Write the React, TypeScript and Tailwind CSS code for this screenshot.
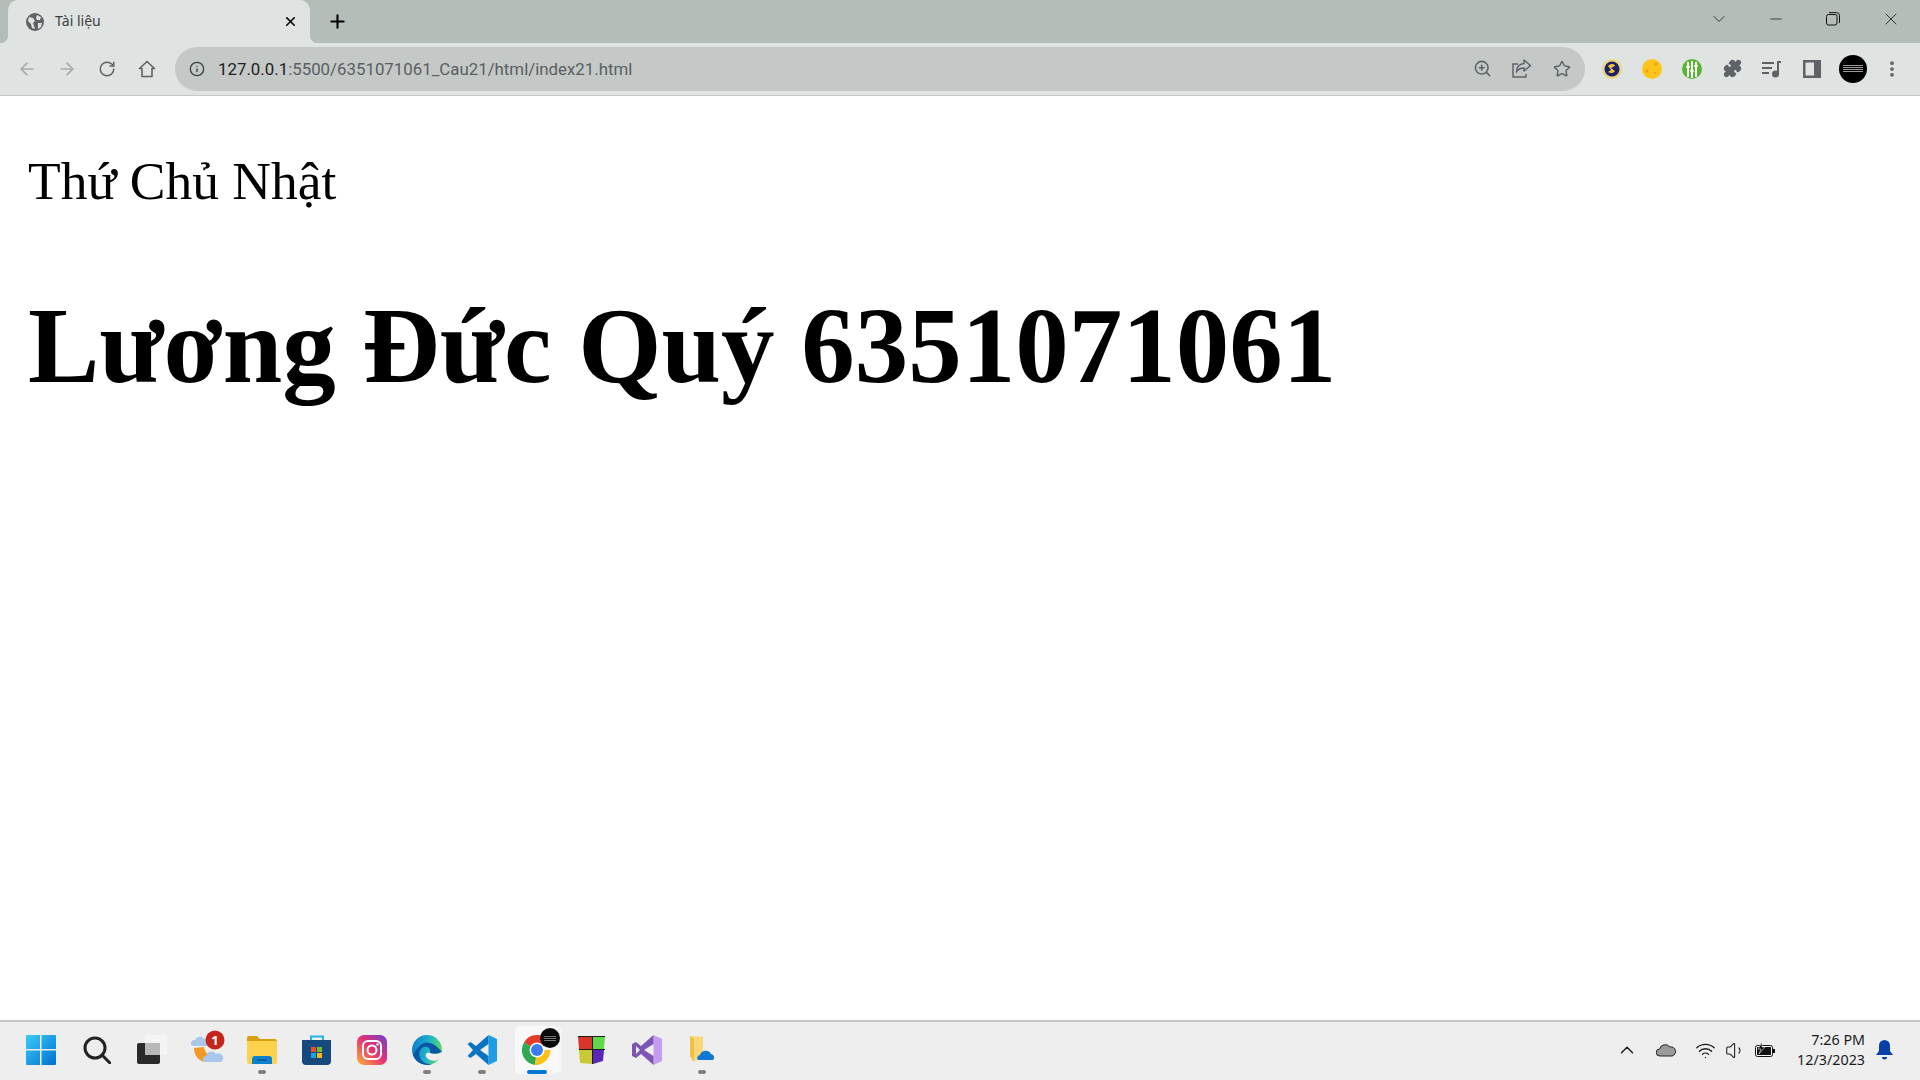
import { ArrowLeft, ArrowRight, ChevronDown, ChevronUp, Minus, Plus, RotateCw, Star, X, ZoomIn, Puzzle, MoreVertical, Info, Wifi, Volume1 } from "lucide-react"

const TITLE = "font-['Liberation_Serif',serif]"

function Globe() {
    return (
        <svg width="18" height="18" viewBox="0 0 18 18">
            <circle cx="9" cy="9" r="9" fill="#5f6368" />
            <path d="M3 4l4 1 2 3-2 2 1 3 1 3-3-1-1-4-3-3zM11 2l4 2-1 3-3 0-1-2zM12 10l4 0-1 4-3 2z" fill="#dfe3e2" />
        </svg>
    )
}

function Tab() {
    return (
        <div className="relative ml-2 flex h-[43px] w-[302px] items-center rounded-t-[10px] bg-[#dfe3e2] pl-[18px] pr-[11px]">
            <div className="absolute bottom-0 -left-2 h-2 w-2 bg-[radial-gradient(circle_at_0_0,#b5bdb8_8px,#dfe3e2_8.5px)]" />
            <div className="absolute bottom-0 -right-2 h-2 w-2 bg-[radial-gradient(circle_at_100%_0,#b5bdb8_8px,#dfe3e2_8.5px)]" />
            <Globe />
            <span className="mb-[2px] pl-[11px] text-[14px] text-[#3c4043]">Tài liệu</span>
            <X className="ml-auto mr-px text-black" size={15} strokeWidth={2.6} />
        </div>
    )
}

function TabStrip() {
    return (
        <div className="flex h-[43px] items-center bg-[#b5bdb8]">
            <Tab />
            <Plus className="ml-[17px] text-black" size={21} strokeWidth={2.4} />
            <div className="ml-auto flex items-center pb-[6px] text-[#1a1a1a]">
                <ChevronDown size={20} strokeWidth={1} className="mr-[38px]" />
                <Minus size={18} strokeWidth={1} className="mr-[41px]" />
                <svg width="14" height="14" viewBox="0 0 14 14" fill="none" stroke="#111" className="mr-[41px]">
                    <rect x="0.5" y="2.5" width="10.5" height="10.5" rx="2" />
                    <path d="M3 .6h7.5a3 3 0 0 1 3 3V11" />
                </svg>
                <X size={20} strokeWidth={1} className="mr-[19px]" />
            </div>
        </div>
    )
}

function Extensions() {
    return (
        <div className="flex items-center text-[#5f6368]">
            <div className="flex w-10 justify-center">
                <svg width="20" height="20" viewBox="0 0 20 20">
                    <circle cx="10" cy="10" r="10" fill="#ead77c" />
                    <circle cx="10" cy="10" r="7.5" fill="#1c1f6e" />
                    <path d="M6 7c3-3 7-2 7 0l-4 2 4 3c-1 2-4 3-7 1l3-2z" fill="#f2c230" />
                </svg>
            </div>
            <div className="flex w-10 justify-center">
                <svg width="20" height="20" viewBox="0 0 20 20">
                    <circle cx="10" cy="10" r="10" fill="#fcc419" />
                    <circle cx="14" cy="5" r="1.6" fill="#f09c1a" />
                    <circle cx="5" cy="12" r="1.400" fill="#f09c1a" />
                    <circle cx="13" cy="14" r="1.100" fill="#f09c1a" />
                </svg>
            </div>
            <div className="flex w-10 justify-center">
                <svg width="20" height="20" viewBox="0 0 20 20">
                    <circle cx="10" cy="10" r="10" fill="#5cb531" />
                    <path d="M6 3v15M10 2v17M14 3v15" stroke="#fff" strokeWidth="2" />
                    <path d="M4 8h4M8 12h4M12 7h4" stroke="#fff" strokeWidth="1.5" />
                </svg>
            </div>
            <div className="flex w-10 justify-center">
                <Puzzle size={19} fill="#5f6368" />
            </div>
            <div className="flex w-10 justify-center">
                <svg width="20" height="18" viewBox="0 0 20 18" fill="none" stroke="#5f6368" strokeWidth="2">
                    <path d="M0 3h12M0 8h10M0 13h7" />
                    <path d="M16 14V2h3" />
                    <circle cx="13.5" cy="14" r="2.5" fill="#5f6368" />
                </svg>
            </div>
            <div className="flex w-10 justify-center">
                <svg width="18" height="18" viewBox="0 0 18 18">
                    <path d="M0 0h18v18H0zM2.5 2.5v13H11v-13z" fill="#5f6368" fillRule="evenodd" />
                </svg>
            </div>
            <div className="flex w-10 justify-center pl-px">
                <div className="flex h-7 w-7 items-center justify-center rounded-full bg-black">
                    <div className="h-[7px] w-5 bg-[repeating-linear-gradient(0deg,#9a9a9a_0,#9a9a9a_1px,#000_1px,#000_2px)]" />
                </div>
            </div>
            <div className="flex w-10 justify-center">
                <MoreVertical size={20} strokeWidth={2.5} />
            </div>
        </div>
    )
}

function Toolbar() {
    return (
        <div className="flex h-[53px] items-center border-b border-[#c4c8c7] bg-[#dfe3e2] pb-px pl-[7px] pr-2">
            <div className="flex w-10 justify-center"><ArrowLeft size={20} className="text-[#a6aaab]" /></div>
            <div className="flex w-10 justify-center"><ArrowRight size={20} className="text-[#a6aaab]" /></div>
            <div className="flex w-10 justify-center"><RotateCw size={18} className="text-[#5f6368]" /></div>
            <div className="flex w-10 justify-center">
                <svg width="18" height="18" viewBox="0 0 18 18" fill="none" stroke="#5f6368" strokeWidth="1.600">
                    <path d="M9 1.500L1.500 8.500H4V16.500H14V8.500H16.500z" strokeLinejoin="round" />
                </svg>
            </div>
            <div className="ml-[8px] mr-[7px] flex h-[44px] flex-1 items-center rounded-full bg-[#c4c9c8] pl-[14px] pr-[3px]">
                <Info size={16} className="text-[#3c4043]" />
                <span className="ml-[13px] mt-[2px] font-['Roboto',sans-serif] text-[16.85px] text-[#5a5e60]">
                    <span className="text-[#1f2123]">127.0.0.1</span>:5500/6351071061_Cau21/html/index21.html
                </span>
                <div className="ml-auto flex items-center text-[#5f6368]">
                    <div className="flex w-10 justify-center"><ZoomIn size={19} /></div>
                    <div className="flex w-10 justify-center">
                        <svg width="20" height="19" viewBox="0 0 20 19" fill="none" stroke="#5f6368" strokeWidth="1.500">
                            <path d="M6 5H1v13h13v-3" />
                            <path d="M12 1l6.500 5.500L12 12V9C8.500 9 6 10 4.500 13c0-5 3-8 7.500-8.500z" strokeLinejoin="round" />
                        </svg>
                    </div>
                    <div className="flex w-10 justify-center"><Star size={18} strokeWidth={2} /></div>
                </div>
            </div>
            <Extensions />
        </div>
    )
}

function Page() {
    return (
        <main className="flex flex-1 flex-col bg-white pl-[28px] text-black">
            <p className={`${TITLE} mt-[55px] text-[53.5px] leading-[61px]`}>Thứ Chủ Nhật</p>
            <h1 className={`${TITLE} mt-[73px] text-[107px] font-bold leading-[122px]`}>Lương Đức Quý 6351071061</h1>
        </main>
    )
}

function TaskItem({ children, dot }: { children: React.ReactNode; dot?: boolean }) {
    return (
        <div className="relative flex h-[48px] w-[55px] items-center justify-center">
            {children}
            {dot && <div className="absolute bottom-0 h-1 w-2 rounded-full bg-[#808080]" />}
        </div>
    )
}

function Taskbar() {
    return (
        <footer className="flex h-[60px] items-center border-t-2 border-[#c6c6c6] bg-[#eeeeee] pb-[2px] pl-[12px] pr-[27px]">
            <div className="flex w-[57px] justify-center">
                <svg width="30" height="30" viewBox="0 0 30 30">
                    <defs>
                        <linearGradient id="winG" x1="0" y1="0" x2="1" y2="1">
                            <stop offset="0" stopColor="#3ccbf8" />
                            <stop offset="1" stopColor="#0070d0" />
                        </linearGradient>
                    </defs>
                    <path d="M1 0h13v14H0V1a1 1 0 0 1 1-1zM15.500 0H29a1 1 0 0 1 1 1v13H15.500zM0 15.500h14V30H1a1 1 0 0 1-1-1zM15.500 15.500H30V29a1 1 0 0 1-1 1H15.500z" fill="url(#winG)" />
                </svg>
            </div>
            <TaskItem>
                <svg width="28" height="28" viewBox="0 0 28 28" fill="none" stroke="#222" strokeWidth="3">
                    <circle cx="12" cy="12" r="10" />
                    <path d="M19 19l8 8" strokeLinecap="round" />
                </svg>
            </TaskItem>
            <TaskItem>
                <svg width="30" height="30" viewBox="0 0 30 30">
                    <rect x="0" y="8" width="23" height="21" rx="2" fill="#2a2a2a" />
                    <rect x="8" y="0" width="22" height="20" rx="2" fill="#f4f4f4" />
                    <rect x="8" y="8" width="15" height="12" fill="#b8b8b8" />
                </svg>
            </TaskItem>
            <TaskItem>
                <svg width="36" height="40" viewBox="0 0 36 40">
                    <path d="M5 18c0 9 7 15 14 14 4-1 7-3 9-6-7 1-12-2-13-9z" fill="#f09a24" />
                    <path d="M2 14a3.500 3.500 0 0 1 4-4 5 5 0 0 1 9-1 3.500 3.500 0 0 1 3 7H4a2.500 2.500 0 0 1-2-2zM14 30a3 3 0 0 1 3-4 5.500 5.500 0 0 1 10-2 3.500 3.500 0 0 1 5 8H16a2.500 2.500 0 0 1-2-2z" fill="#a9c7ea" />
                    <circle cx="26" cy="10" r="9.500" fill="#c4261d" />
                    <text x="26" y="14.500" textAnchor="middle" fontSize="13" fontWeight="700" fill="#fff" fontFamily="Noto Sans, sans-serif">1</text>
                </svg>
            </TaskItem>
            <TaskItem dot>
                <svg width="30" height="28" viewBox="0 0 30 28">
                    <path d="M0 2a2 2 0 0 1 2-2h8l3 3h15a2 2 0 0 1 2 2v3H0z" fill="#dc9f0c" />
                    <path d="M0 5h30v21a2 2 0 0 1-2 2H2a2 2 0 0 1-2-2z" fill="#fdd24c" />
                    <path d="M5 28v-5a3 3 0 0 1 3-3h14a3 3 0 0 1 3 3v5z" fill="#0f80cc" />
                    <path d="M10 24h10" stroke="#0a4e86" strokeWidth="1.200" />
                </svg>
            </TaskItem>
            <TaskItem>
                <svg width="30" height="30" viewBox="0 0 30 30">
                    <path d="M9 5V1.500h12V5" fill="none" stroke="#23b4e8" strokeWidth="2" />
                    <path d="M0 5h29v21a4 4 0 0 1-4 4H4a4 4 0 0 1-4-4z" fill="#164a7e" />
                    <rect x="9" y="12" width="5" height="5" fill="#e8502a" />
                    <rect x="15" y="12" width="5" height="5" fill="#7fba2a" />
                    <rect x="9" y="18" width="5" height="5" fill="#18a4e8" />
                    <rect x="15" y="18" width="5" height="5" fill="#fbb80c" />
                </svg>
            </TaskItem>
            <TaskItem>
                <svg width="30" height="30" viewBox="0 0 30 30">
                    <defs>
                        <linearGradient id="igG" x1="0" y1="1" x2="1" y2="0">
                            <stop offset="0" stopColor="#fdb53a" />
                            <stop offset="0.5" stopColor="#e8326e" />
                            <stop offset="1" stopColor="#6f3fd0" />
                        </linearGradient>
                    </defs>
                    <rect width="30" height="30" rx="7" fill="url(#igG)" />
                    <rect x="6" y="6" width="18" height="18" rx="5" fill="none" stroke="#fff" strokeWidth="2" />
                    <circle cx="15" cy="15" r="4.500" fill="none" stroke="#fff" strokeWidth="2" />
                    <circle cx="20.500" cy="9.500" r="1.200" fill="#fff" />
                </svg>
            </TaskItem>
            <TaskItem dot>
                <svg width="30" height="30" viewBox="0 0 30 30">
                    <defs>
                        <linearGradient id="edgeG" x1="0" y1="0.300" x2="1" y2="0.500">
                            <stop offset="0" stopColor="#0c7cd0" />
                            <stop offset="0.550" stopColor="#1fb5c8" />
                            <stop offset="1" stopColor="#62d95c" />
                        </linearGradient>
                    </defs>
                    <circle cx="15" cy="15" r="15" fill="url(#edgeG)" />
                    <path d="M30 16c-2 3-9 3-12 2 1-4-2-7-6-6-4 1-6 6-4 11 2 4 7 7 13 6-8 3-17-1-20-9C7 9 12 6 18 8c4 1 8 4 11 8z" fill="#0b56a4" />
                    <path d="M30 17c-3 2-8 3-12 1-3-2-6 2-3 5 3 3 9 4 12 1 2-2 3-4 3-7z" fill="#eeeeee" />
                </svg>
            </TaskItem>
            <TaskItem dot>
                <svg width="30" height="30" viewBox="0 0 30 30">
                    <path d="M21.500 0L30 4v22l-8.500 4z" fill="#1f9ce8" />
                    <path d="M21.500 0L9 11 3.500 7 .5 9 6 15 .5 21l3 2L9 19l12.500 11v-9L13 15l8.500-6z" fill="#0b74c0" />
                </svg>
            </TaskItem>
            <div className="relative flex h-[48px] w-[55px] justify-center">
                <div className="relative flex h-[48px] w-[44px] items-center justify-center rounded-[5px] bg-[#f8f8f8] shadow-[4px_0_0_-1px_#f4f4f4]">
                    <svg width="30" height="30" viewBox="0 0 30 30">
                        <path d="M15 15L2 7.500A15 15 0 0 1 28 7.500z" fill="#e33b2e" />
                        <path d="M15 15L2 7.500A15 15 0 0 0 13 30z" fill="#2fa84f" />
                        <path d="M15 15h13.500A15 15 0 0 1 13 30z" fill="#fbc116" />
                        <circle cx="15" cy="15" r="7.500" fill="#fff" />
                        <circle cx="15" cy="15" r="6" fill="#3b7cf0" />
                    </svg>
                    <div className="absolute -right-px top-[2px] flex h-5 w-5 items-center justify-center rounded-full bg-[#0a0a0a]">
                        <div className="h-[6px] w-3 bg-[repeating-linear-gradient(0deg,#7a7a7a_0,#7a7a7a_1px,#000_1px,#000_2px)]" />
                    </div>
                    <div className="absolute bottom-0 h-1 w-5 rounded-full bg-[#0078d4]" />
                </div>
            </div>
            <TaskItem>
                <svg width="29" height="30" viewBox="0 0 29 30">
                    <path d="M1 1h14v13H2z" fill="#d8352a" />
                    <path d="M16 1h12l-1 13H16z" fill="#5fd84a" />
                    <path d="M2 15h13v14L3 28z" fill="#c9c935" />
                    <path d="M16 15h11l-1 11-10 3z" fill="#5a28b8" />
                    <path d="M1 1h27v1H1zM15 1h1v28h-1zM2 14h26v1H2z" fill="#1c1c1c" />
                </svg>
            </TaskItem>
            <TaskItem>
                <svg width="30" height="30" viewBox="0 0 30 30">
                    <path d="M21.500 0L30 4v22l-8.500 4z" fill="#c79bef" />
                    <path d="M21.500 0L9 11 4 7 0 9v12l4 2 5-4 12.500 11v-9L12 15l9.500-6zM4 11l4 4-4 4z" fill="#7d55b4" fillRule="evenodd" />
                </svg>
            </TaskItem>
            <TaskItem dot>
                <svg width="26" height="28" viewBox="0 0 26 28">
                    <path d="M1 0l13 1v22l-10 2-3-5z" fill="#f8d777" />
                    <path d="M1 0l4 3v23l-4-6z" fill="#eebf49" />
                    <path d="M9 24a3 3 0 0 1 2-5 6 6 0 0 1 11-1 3.500 3.500 0 0 1 2 6z" fill="#0f78d4" />
                </svg>
            </TaskItem>

            <div className="ml-auto flex items-center text-[#1a1a1a]">
                <ChevronUp size={22} strokeWidth={1.600} className="mr-[18px]" />
                <svg width="20" height="14" viewBox="0 0 20 14" className="mr-[19px]">
                    <path d="M4 13a3.500 3.500 0 0 1-.5-7A6 6 0 0 1 14 4a4.500 4.500 0 0 1 2 9z" fill="#9a9a9a" stroke="#222" strokeWidth="1" />
                </svg>
                <Wifi size={21} strokeWidth={1.500} className="mr-[9px]" />
                <Volume1 size={21} strokeWidth={1.200} className="mr-[9px]" />
                <svg width="20" height="16" viewBox="0 0 20 16" className="mr-[22px]">
                    <rect x="0.500" y="3.500" width="17" height="11" rx="2" fill="#fff" stroke="#111" />
                    <rect x="2" y="5" width="14" height="8" fill="#111" />
                    <rect x="18" y="7" width="2" height="4" fill="#111" />
                    <path d="M7 0L3 7h3l-2 5 6-7H7z" fill="#111" stroke="#eee" strokeWidth="0.600" />
                </svg>
                <div className="flex flex-col items-end font-['Noto_Sans',sans-serif] text-[14.3px] leading-[20px] text-[#1a1a1a]">
                    <span>7:26 PM</span>
                    <span>12/3/2023</span>
                </div>
                <svg width="17" height="20" viewBox="0 0 17 20" className="ml-[11px]">
                    <path d="M8.500 0a5.500 5.500 0 0 1 5.500 5.500V11l3 4H0l3-4V5.500A5.500 5.500 0 0 1 8.500 0z" fill="#0a3fa8" />
                    <path d="M6 17h5a2.500 2.500 0 0 1-5 0z" fill="#0a3fa8" />
                </svg>
            </div>
        </footer>
    )
}

export default function App() {
    return (
        <div className="flex h-[1080px] w-[1920px] flex-col overflow-hidden font-['Noto_Sans',sans-serif]">
            <TabStrip />
            <Toolbar />
            <Page />
            <Taskbar />
        </div>
    )
}
